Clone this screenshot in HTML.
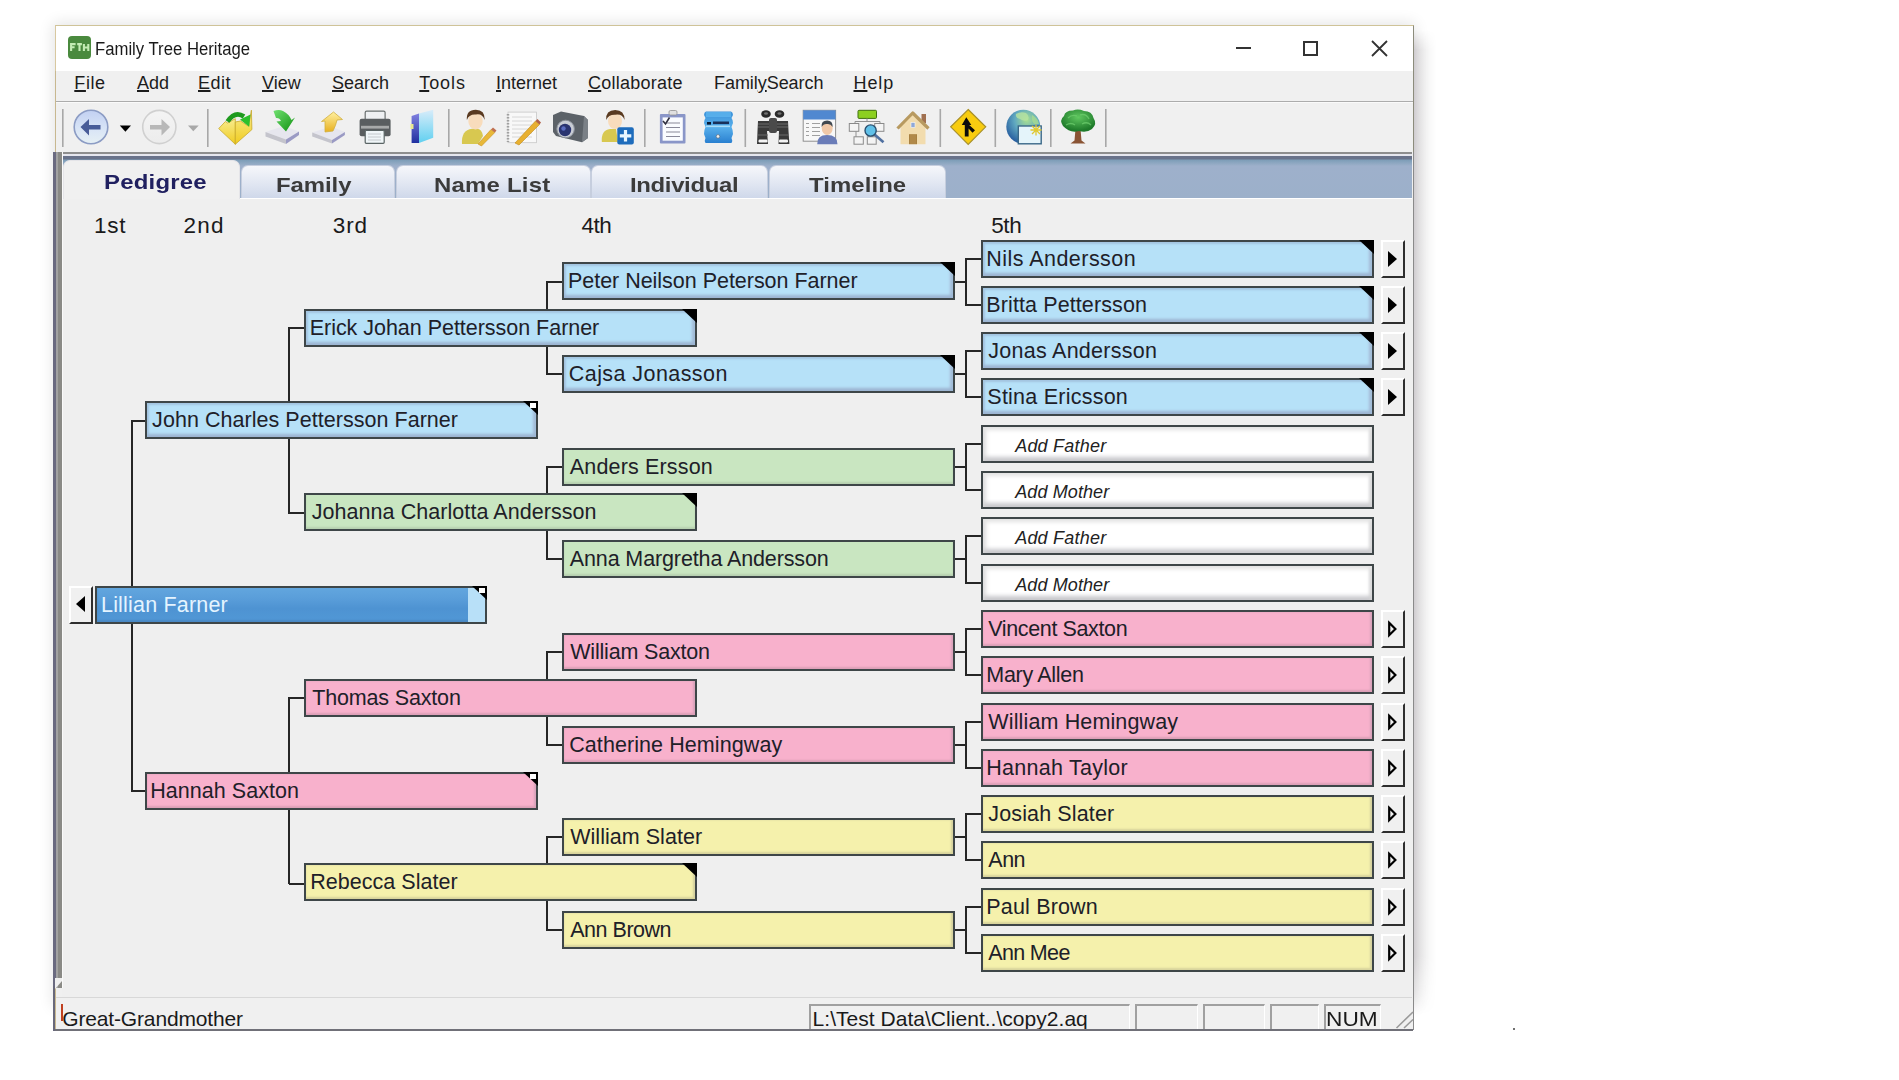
<!DOCTYPE html>
<html><head><meta charset="utf-8"><style>
*{margin:0;padding:0;box-sizing:border-box}
html,body{width:1899px;height:1080px;overflow:hidden;background:#fff;font-family:"Liberation Sans",sans-serif;position:relative}
.abs{position:absolute}
#shadow{position:absolute;left:55px;top:25px;width:1358px;height:980px;box-shadow:0 0 14px 2px rgba(0,0,0,0.11)}
#win{position:absolute;left:55px;top:25px;width:1359px;height:1005px;background:#f0f0f0;border:1px solid #c8b890;border-top-color:#cfc398;border-right-color:#8c8c7c}
#title{position:absolute;left:55px;top:25px;width:1359px;height:46px;background:#fff;border:1px solid #d8c8a0;border-top-color:#cfc398;border-right-color:#8c8c7c;border-bottom:none}
#ttl{position:absolute;left:94.8px;top:39px;font-size:18px;color:#1a1a1a;white-space:nowrap;transform:scaleX(0.928);transform-origin:0 0}
#menubar{position:absolute;left:56px;top:71px;width:1357px;height:30.5px;background:#f0f0f0;border-bottom:1.5px solid #acacac}
.mi{position:absolute;top:72.5px;font-size:18px;color:#1c1c1c;white-space:nowrap}
.mi u{text-decoration:underline;text-decoration-thickness:1.5px;text-underline-offset:1px}
#toolbar{position:absolute;left:56px;top:101.5px;width:1357px;height:50.5px;background:#f0f0f0;border-top:1px solid #fafafa}
.sep{position:absolute;top:109px;width:2px;height:38px;background:#a6a6a6;border-right:1px solid #fff}
#tbline{position:absolute;left:56px;top:152px;width:1356px;height:2px;background:#8e8e8e}
#tabstrip{position:absolute;left:62px;top:154px;width:1350px;height:44px;background:linear-gradient(#e6e6ee 0,#e6e6ee 2px,#69728a 2px,#69728a 5px,#7d9db7 6px,#93aac4 10px,#9eb0cb 12px,#9cb0ca 43px)}
.tab{position:absolute;top:165px;height:33px;border:1px solid #c6cede;border-bottom:none;border-radius:7px 7px 0 0;background:linear-gradient(#f6f7fb,#dfe5f1 60%,#cfd8ea);font-weight:bold;font-size:21px;color:#3b3b3b;text-align:center;white-space:nowrap;line-height:38px}
.tab.on{top:160px;height:39px;background:#f0f0f0;border-color:#e4e4e8}
.tabt{position:absolute;top:173px;font-weight:bold;font-size:21px;color:#3b3b3b;white-space:nowrap;transform:scaleX(1.14);transform-origin:0 0}
.tabt.on{top:170px;color:#202060}
#content{position:absolute;left:62px;top:198px;width:1350px;height:799px;background:#efefef;border-top:1px solid #fff}
#lbar{position:absolute;left:53px;top:152px;width:10px;height:836px;background:linear-gradient(90deg,#6a6a80 0,#6a6a80 2.5px,#a2a2a2 2.5px,#a2a2a2 4.5px,#8a8a86 4.5px,#8a8a86 9px,#fafafa 9px)}
.col{position:absolute;top:213px;font-size:22.5px;color:#1a1a1a;white-space:nowrap}
#status{position:absolute;left:56px;top:997px;width:1356px;height:33px;background:#f0f0f0;border-top:1px solid #d8d8d8}
#winbot{position:absolute;left:53px;top:1029px;width:1360px;height:2px;background:#707078}
.sp{position:absolute;top:1004px;height:25px;border-top:2px solid #a0a0a0;border-left:2px solid #a0a0a0;border-right:1px solid #fff}
.st{position:absolute;top:1007px;font-size:21px;color:#1a1a1a;white-space:nowrap}
#rborder{position:absolute;left:1412.5px;top:152px;width:1px;height:878px;background:#8a8a8a}
/* tree */
.ln{position:absolute;background:#262626}
.bx{position:absolute;width:393px;height:38px;border:2px solid #3e4648}
.bx .tx{position:absolute;left:6px;top:0;line-height:34px;font-size:21.5px;color:#202028;white-space:nowrap}
.bx .it{font-style:italic;font-size:18px;top:2px;color:#222}
.bx.b{background:#b6e1f8;box-shadow:inset 0 2px 2px #a4c6e2,inset 0 -3px 3px #9db5d2,inset 2px 0 2px #a8cbe6,inset -3px 0 3px #a4bcd6}
.bx.g{background:#c9e6c1;box-shadow:inset 0 -2px 2px #b7d0b0}
.bx.p{background:#f8b1cc;box-shadow:inset 0 -2px 2px #dca0b8,inset -2px 0 2px #d8a4bc}
.bx.y{background:#f5f1ac;box-shadow:inset 0 -2px 2px #d8d49c,inset -2px 0 2px #d4d0a0}
.bx.w{background:#fff;box-shadow:inset 0 3px 4px #e4e4e4,inset 0 -4px 4px #c8c8cc,inset 4px 0 4px #ececec,inset -3px 0 3px #e0e0e0}
.bx.sel{background:linear-gradient(#62a6de 0,#5a9eda 30%,#4e93d2 60%,#5198d6 100%);box-shadow:inset 0 -2px 2px #4a88c4}
.bx.sel .tx{color:#e4f4ff}
.bx .tri{position:absolute;right:-2px;top:-2px;width:0;height:0;border-style:solid;border-width:0 15.5px 14px 0;border-color:transparent #000 transparent transparent}
.bx .sq{position:absolute;right:0;top:0;width:6.5px;height:5px;background:#fff}
.bx .strip{position:absolute;right:0;top:0;width:17px;height:34px;background:#b8e0f8}
.arr{position:absolute;width:24px;height:38px;background:#f0f0f0;border-top:2px solid #fff;border-left:2px solid #fff;border-right:2px solid #2e2e2e;border-bottom:2px solid #2e2e2e}
.arr i{position:absolute;left:5px;top:9px;width:0;height:0;border-style:solid;border-width:8px 0 8px 9px;border-color:transparent transparent transparent #000}
.larr{position:absolute;width:24px;height:38px;background:#f0f0f0;border-top:2px solid #fff;border-left:2px solid #fff;border-right:2px solid #2e2e2e;border-bottom:2px solid #2e2e2e}
.larr i{position:absolute;left:4.5px;top:8.5px;width:0;height:0;border-style:solid;border-width:8px 9px 8px 0;border-color:transparent #000 transparent transparent}

</style></head><body>
<div id="shadow"></div>
<div id="rshadow" class="abs" style="left:1414px;top:30px;width:22px;height:985px;background:linear-gradient(90deg,rgba(40,20,40,0.16) 0,rgba(40,30,40,0.10) 25%,rgba(0,0,0,0.04) 60%,rgba(0,0,0,0) 100%);-webkit-mask-image:linear-gradient(transparent 0,#000 2%,#000 94%,transparent 100%)"></div>
<div id="win"></div>
<div id="title"></div>
<svg class="abs" style="left:68px;top:36px" width="23" height="23"><rect x="0" y="0" width="23" height="23" rx="4" fill="#4a8a3e"/><path d="M3.1 15V8.1H7.6M3.1 11.3H6.6M9.2 8.1H13.9M11.5 8.1V15M15.9 8.1V15M20.3 8.1V15M15.9 11.5H20.3" fill="none" stroke="#c4ecb4" stroke-width="2.1"/></svg>
<div id="ttl">Family Tree Heritage</div>
<div class="abs" style="left:1236px;top:47px;width:15px;height:2px;background:#333"></div>
<div class="abs" style="left:1303px;top:41px;width:15px;height:15px;border:2px solid #333"></div>
<svg class="abs" style="left:1371px;top:40px" width="17" height="17"><path d="M1 1L16 16M16 1L1 16" stroke="#333" stroke-width="1.8"/></svg>
<div id="menubar"></div>
<div class="mi" style="left:74.3px;letter-spacing:0.6px"><u>F</u>ile</div>
<div class="mi" style="left:137px"><u>A</u>dd</div>
<div class="mi" style="left:198px;letter-spacing:0.5px"><u>E</u>dit</div>
<div class="mi" style="left:262px"><u>V</u>iew</div>
<div class="mi" style="left:332px"><u>S</u>earch</div>
<div class="mi" style="left:419.3px;letter-spacing:0.9px"><u>T</u>ools</div>
<div class="mi" style="left:496px"><u>I</u>nternet</div>
<div class="mi" style="left:588px;letter-spacing:0.25px"><u>C</u>ollaborate</div>
<div class="mi" style="left:714px;letter-spacing:-0.05px">Famil<u>y</u>Search</div>
<div class="mi" style="left:853.5px;letter-spacing:0.9px"><u>H</u>elp</div>
<div id="toolbar"></div>
<svg class="abs" style="left:0;top:0" width="1120" height="155" viewBox="0 0 1120 155">
<defs>
<linearGradient id="gBack" x1="0" y1="0" x2="0" y2="1"><stop offset="0" stop-color="#c2d0f2"/><stop offset="0.55" stop-color="#d8e4f6"/><stop offset="1" stop-color="#e6f0f4"/></linearGradient>
<linearGradient id="gFwd" x1="0" y1="0" x2="0" y2="1"><stop offset="0" stop-color="#f4f4f4"/><stop offset="1" stop-color="#ececec"/></linearGradient>
<linearGradient id="gFold" x1="0" y1="0" x2="0" y2="1"><stop offset="0" stop-color="#f8ec90"/><stop offset="1" stop-color="#f0cc20"/></linearGradient>
<linearGradient id="gGreen" x1="0" y1="0" x2="1" y2="1"><stop offset="0" stop-color="#70e070"/><stop offset="1" stop-color="#109010"/></linearGradient>
<linearGradient id="gYel" x1="0" y1="0" x2="0" y2="1"><stop offset="0" stop-color="#fff0a0"/><stop offset="1" stop-color="#e8b020"/></linearGradient>
<linearGradient id="gBook" x1="0" y1="0" x2="0" y2="1"><stop offset="0" stop-color="#d8ecfa"/><stop offset="1" stop-color="#60d0f0"/></linearGradient>
<linearGradient id="gSpine" x1="0" y1="0" x2="0" y2="1"><stop offset="0" stop-color="#8080e0"/><stop offset="1" stop-color="#2030a0"/></linearGradient>
<linearGradient id="gDrawer" x1="0" y1="0" x2="0" y2="1"><stop offset="0" stop-color="#3a90d8"/><stop offset="0.5" stop-color="#58b0ec"/><stop offset="1" stop-color="#2a80d0"/></linearGradient>
<radialGradient id="gGlobe" cx="0.6" cy="0.3" r="0.8"><stop offset="0" stop-color="#a8e090"/><stop offset="0.45" stop-color="#60a8c0"/><stop offset="1" stop-color="#1a4c98"/></radialGradient>
<radialGradient id="gTree" cx="0.5" cy="0.35" r="0.6"><stop offset="0" stop-color="#60c860"/><stop offset="1" stop-color="#1e7a2a"/></radialGradient>
</defs>
<!-- separators -->
<g fill="#a8a8a8">
<rect x="62" y="109" width="1.6" height="38"/><rect x="207" y="109" width="1.6" height="38"/><rect x="448" y="109" width="1.6" height="38"/>
<rect x="644" y="109" width="1.6" height="38"/><rect x="744.5" y="109" width="1.6" height="38"/><rect x="939.5" y="109" width="1.6" height="38"/>
<rect x="994.5" y="109" width="1.6" height="38"/><rect x="1050" y="109" width="1.6" height="38"/><rect x="1105" y="109" width="1.6" height="38"/>
</g>
<!-- back -->
<circle cx="91" cy="127" r="16.8" fill="url(#gBack)" stroke="#8c9cc4" stroke-width="1.6"/>
<path d="M80.5 127 L89 119 L89 125 L100.5 125 L100.5 129.5 L89 129.5 L89 135.5 Z" fill="#485c98"/>
<path d="M119.8 125.4 L131 125.4 L125.4 131.8 Z" fill="#000"/>
<!-- forward -->
<circle cx="159.3" cy="127" r="16.6" fill="url(#gFwd)" stroke="#d0d0d0" stroke-width="1.6"/>
<path d="M170 127 L161.5 119 L161.5 125 L150 125 L150 129.5 L161.5 129.5 L161.5 135.5 Z" fill="#b8b8b8"/>
<path d="M188 125.4 L198.7 125.4 L193.3 131.3 Z" fill="#a8a8a8"/>
<!-- folder -->
<path d="M218.7 128.6 L225.4 121.5 L227.7 123 L235.3 118.7 L235.3 144.3 Z" fill="url(#gFold)" stroke="#c8a828" stroke-width="0.8"/>
<path d="M235.3 144.3 L235.3 122 L240.5 121 L248.6 126.3 L251.4 110.2 L251.9 129.6 Z" fill="url(#gFold)" stroke="#c8a828" stroke-width="0.8"/>
<path d="M227.5 121.5 Q235 110.5 244 116.5" fill="none" stroke="#1e9a1e" stroke-width="4.6"/>
<path d="M240 119.5 L250.5 114.5 L249.2 126.8 Z" fill="#2cc02c"/>
<!-- download disk -->
<path d="M265.5 132 L284 126 L299 131.5 L286 139.5 Z" fill="#e6e6ee"/>
<path d="M265.5 132 L286 139.5 L286 144 L265.5 136.5 Z" fill="#c4c4cc"/>
<path d="M286 139.5 L299 131.5 L299 135 L286 144 Z" fill="#9a9ac4"/>
<path d="M273.5 111 Q279 109 283 111 Q289 114 291.5 120 L295 117.5 L286 131.5 L276.5 121.5 L281 121 Q279.5 117.5 276 118 Z" fill="url(#gGreen)"/>
<!-- upload disk -->
<path d="M312.2 132.5 L331 126.5 L344.9 132 L332 140 Z" fill="#e6e6ee"/>
<path d="M312.2 132.5 L332 140 L332 143.5 L312.2 136.5 Z" fill="#c4c4cc"/>
<path d="M332 140 L344.9 132 L344.9 135 L332 143.5 Z" fill="#9a9ac4"/>
<path d="M325 132 L325 121 L321.5 121.5 L333.5 112 L342.5 119.5 L337 120 Q336 125 333 131 Z" fill="url(#gYel)" stroke="#d0b040" stroke-width="0.8"/>
<!-- printer -->
<rect x="365.2" y="111.1" width="19.9" height="11" rx="1.5" fill="#eef0f2" stroke="#6a7070" stroke-width="1.2"/>
<rect x="359.6" y="118.7" width="31" height="17.5" rx="2" fill="#5a5e60"/>
<rect x="361" y="125.8" width="28" height="2.8" fill="#a8aaaa"/>
<rect x="365.2" y="130.5" width="19" height="12.8" rx="1" fill="#f0f6f8" stroke="#5a6464" stroke-width="1.2"/>
<path d="M368 134h13M368 137h13M368 140h13" stroke="#c0c4c8" stroke-width="0.9"/>
<!-- book -->
<path d="M419 113.5 L433.2 109.8 L433.2 137.7 L419 143 Z" fill="url(#gBook)"/>
<path d="M411.6 116 L419 113.5 L419 143 L411.6 143 Z" fill="url(#gSpine)"/>
<rect x="410.5" y="124" width="3" height="5" fill="#e8e890"/>
<!-- person edit -->
<path d="M462 144 Q461 130 472 128.7 L477 128.7 Q482 129 483 136 L478 144 Z" fill="#d8c850"/>
<ellipse cx="475.5" cy="121" rx="7.2" ry="8.5" fill="#f8dcbc"/>
<path d="M466.9 120 Q466 109.8 475.8 109.8 Q485 109.8 484.8 120 Q482 113 475.8 114.5 Q469 114 466.9 120 Z" fill="#5a3a20"/>
<path d="M478 144 L491 129.5 L494.8 132.5 L481.5 146 Z" fill="#e8b838" stroke="#c89020" stroke-width="0.6"/>
<path d="M491 129.5 L493 127.5 L496.5 130.5 L494.8 132.5 Z" fill="#c07050"/>
<!-- notepad -->
<rect x="508" y="112.1" width="28.5" height="30.6" fill="#f8f8f8" stroke="#c8c8c8" stroke-width="0.8"/>
<path d="M512 117h20M512 121h20M512 125h20M512 129h20M512 133h20M512 137h20" stroke="#d4d4d4" stroke-width="0.9"/>
<path d="M508 114v28" stroke="#a0a0a0" stroke-width="2.5" stroke-dasharray="1.5 1.5"/>
<path d="M515 143 L535.5 121 L539.5 124.5 L519 145 Z" fill="#e8b030" stroke="#c08818" stroke-width="0.6"/>
<path d="M535.5 121 L537.5 119 L541 122.5 L539.5 124.5 Z" fill="#b06048"/>
<!-- camera -->
<path d="M553 115 L561 111.4 L584 116 L588 120 L588 138 L582 142.3 L556 136 L553 132 Z" fill="#5c6268"/>
<path d="M584 116 L588 120 L588 138 L582 142.3 Z" fill="#7a8086"/>
<circle cx="565.6" cy="129" r="8.8" fill="#c8ccd4" stroke="#8a9098" stroke-width="1"/>
<circle cx="565" cy="130" r="6.2" fill="#2a3470"/>
<circle cx="563.5" cy="128.5" r="2.2" fill="#5a6cc0"/>
<!-- person add -->
<path d="M601.8 142 Q601 130 610 129 L616 129 L618 142 Z" fill="#d8c850"/>
<ellipse cx="615" cy="121" rx="7" ry="8" fill="#f8dcbc"/>
<path d="M606.2 120 Q605.5 110 615.2 110 Q624.6 110 624.6 120 Q622 113.5 615.2 114.8 Q608.5 114.5 606.2 120 Z" fill="#5a3a20"/>
<rect x="617.3" y="127.2" width="16.5" height="17.4" rx="2" fill="#1e6cbc"/>
<path d="M625.5 130 v11.5 M619.8 135.8 h11.5" stroke="#e8f6ff" stroke-width="3.2"/>
<!-- clipboard -->
<rect x="659.9" y="113.9" width="25.6" height="29.6" rx="1" fill="#8a96c8"/>
<rect x="662.6" y="117.4" width="20.2" height="23.3" fill="#fafcff"/>
<rect x="669" y="110.5" width="8" height="4.5" rx="1.5" fill="#e0e0e0" stroke="#909090" stroke-width="0.8"/>
<path d="M666 123h14M666 127.5h14M666 132h14M666 136.5h14" stroke="#8a8a9a" stroke-width="1.2"/>
<path d="M663 121 L665.5 124 L669.5 117.5" fill="none" stroke="#303040" stroke-width="1.6"/>
<!-- drawer -->
<path d="M706 111.5 L731 111.5 Q733 112 733 115 L731.5 118 Q733 120 733 123 L731.5 127 Q733 130 733 134 L731.5 138 Q733 141 731.5 143 L705.5 143 Q704 141 705.5 138 L704 134 Q704 130 705.5 127 L704 123 Q704 120 705.5 118 L704 115 Q704 112 706 111.5 Z" fill="url(#gDrawer)"/>
<rect x="706" y="112" width="25" height="5" fill="#5cb4ee" opacity="0.8"/>
<rect x="707" y="122" width="4" height="2.6" fill="#0a1a30"/>
<rect x="713" y="121.5" width="16" height="2.6" fill="#18305a"/>
<rect x="706" y="125.5" width="24" height="1.6" fill="#a8dcf8"/>
<circle cx="718" cy="136.4" r="1.8" fill="#f0f0f0" stroke="#506070" stroke-width="0.6"/>
<!-- binoculars -->
<ellipse cx="766" cy="114" rx="4.8" ry="3.8" fill="#2a2a2a"/><ellipse cx="779.5" cy="114" rx="4.8" ry="3.8" fill="#2a2a2a"/>
<ellipse cx="766" cy="113.5" rx="2" ry="1.2" fill="#707070"/><ellipse cx="779.5" cy="113.5" rx="2" ry="1.2" fill="#707070"/>
<path d="M758 121 L770 121 L770 131 L767 131 L768 144 L757 144 L757.5 131 Z" fill="#3a3a3a"/>
<path d="M788 121 L776 121 L776 131 L779 131 L778.5 144 L789.4 144 L788.5 131 Z" fill="#3a3a3a"/>
<path d="M758 124h12M758 127h12M776 124h12M776 127h12M758 135h10M779 135h10" stroke="#6a6a6a" stroke-width="1"/>
<rect x="769" y="118" width="8" height="15" rx="2" fill="#4a4a4a"/>
<rect x="758.5" y="139.5" width="9" height="3" rx="1.2" fill="#f4f4f4"/><rect x="779" y="139.5" width="9" height="3" rx="1.2" fill="#f4f4f4"/>
<!-- window person -->
<rect x="803.2" y="110.3" width="32.4" height="30.9" fill="#f8f8f8" stroke="#909090" stroke-width="1"/>
<rect x="803.2" y="110.3" width="32.4" height="9.2" fill="#5088d0"/>
<path d="M806 123.5h3M812 123.5h8M806 127.5h3M812 127.5h8M806 131.5h3M812 131.5h8M806 135.5h3M812 135.5h8" stroke="#a0a0a0" stroke-width="1"/>
<path d="M817.2 144.2 Q817 135 827 135 Q837.5 135 837.5 144.2 Z" fill="#6a7cb8"/>
<ellipse cx="827.2" cy="128" rx="5.5" ry="7" fill="#f0c8a8"/>
<path d="M821.6 127 Q821 120.6 827.2 120.6 Q832.7 120.6 832.7 127 Q830.5 123.5 827.2 124 Q823.5 123.5 821.6 127 Z" fill="#404850"/>
<!-- chart magnifier -->
<rect x="858" y="110.3" width="18.5" height="8.1" rx="1" fill="#8cd020" stroke="#407010" stroke-width="1"/>
<path d="M867 118.4v3 M855 126v-4.5h25v4.5 M856 131v6 M871 131v6" stroke="#909090" stroke-width="1" fill="none"/>
<rect x="849.3" y="123.5" width="9.5" height="7.8" fill="#f4f4f4" stroke="#8a8a8a" stroke-width="1"/>
<rect x="874.7" y="123.5" width="9.2" height="7.8" fill="#f4f4f4" stroke="#8a8a8a" stroke-width="1"/>
<rect x="854" y="136.8" width="9.3" height="7.4" fill="#f4f4f4" stroke="#8a8a8a" stroke-width="1"/>
<rect x="867.3" y="136.8" width="8.9" height="7.4" fill="#f4f4f4" stroke="#8a8a8a" stroke-width="1"/>
<path d="M874 134 L883.5 142.3" stroke="#5070a0" stroke-width="2.6"/>
<circle cx="870.6" cy="130.5" r="5.6" fill="#60c0e8" stroke="#2a5070" stroke-width="1.4"/>
<!-- house -->
<rect x="921.5" y="114" width="4.5" height="9" fill="#a07050"/>
<path d="M900.5 126 L912.7 114 L925.5 126 L925.5 144.2 L900.5 144.2 Z" fill="#f2dcae"/>
<path d="M897.5 128.5 L912.7 113 L928.5 128.5" fill="none" stroke="#b89a60" stroke-width="3.2" stroke-linejoin="round"/>
<rect x="909" y="134.2" width="8" height="10" fill="#a88040"/>
<path d="M911 134.5v9.5M913 134.5v9.5M915 134.5v9.5" stroke="#c8a060" stroke-width="0.6"/>
<rect x="911" y="122.5" width="4" height="5" fill="#90a8d8" stroke="#f8f8f8" stroke-width="0.6"/>
<!-- diamond -->
<path d="M968.2 109.5 L985.7 126.8 L968.2 144.3 L950.7 126.8 Z" fill="#f8cc10" stroke="#a89028" stroke-width="1.2"/>
<path d="M966.3 117.2 L961.8 125 L964.8 125 L964.8 136.5 L968.6 136.5 L968.6 128.5 L972.5 132.8 L975 130.2 L968.6 124.5 L968.6 125 L971.3 125 Z" fill="#0c0c0c"/>
<!-- globe -->
<circle cx="1023.3" cy="126.8" r="17" fill="url(#gGlobe)"/>
<path d="M1016 114 Q1021 111 1026 113 Q1030 116 1028 120 Q1024 122 1020 119 Q1015 118 1016 114 Z" fill="#b8e4a0" opacity="0.8"/>
<path d="M1032 115 Q1038 118 1039 124 L1034 124 Q1031 120 1032 115 Z" fill="#a8dc90" opacity="0.8"/>
<rect x="1018.3" y="126" width="22.9" height="17.8" fill="#e4f4fa" stroke="#3a6888" stroke-width="1.4"/>
<path d="M1032 126 L1040 134 M1040 126 L1032 134 M1036 124.5 v11 M1030.5 130 h11" stroke="#e0c830" stroke-width="1.3"/>
<!-- tree -->
<path d="M1075.5 129 L1074.5 140.5 L1070.5 143.4 L1085.5 143.4 L1081.5 140.5 L1080.5 129 Z" fill="#8a5434"/>
<path d="M1063 126 Q1059 120 1064 116 Q1065 110.5 1073 110.5 Q1078 108.5 1084 111 Q1092 111 1093.5 118 Q1097.5 124 1092 129 Q1087 133 1079 131 Q1070 133.5 1063 126 Z" fill="url(#gTree)"/>
<path d="M1068 118 Q1072 114 1077 116 M1080 115 Q1086 113 1089 119 M1066 125 Q1071 122 1075 125 M1082 124 Q1087 121 1091 125" fill="none" stroke="#70d070" stroke-width="1.3" opacity="0.7"/>
</svg>

<div id="tbline"></div>
<div id="tabstrip"></div>
<div id="content"></div>
<div class="tab" style="left:241px;width:154px"></div>
<div class="tab" style="left:396px;width:195px"></div>
<div class="tab" style="left:591px;width:177px"></div>
<div class="tab" style="left:769px;width:177px"></div>
<div class="tab on" style="left:63px;width:177px"></div>
<div class="tabt" style="left:276.4px;letter-spacing:-0.06px">Family</div>
<div class="tabt" style="left:434.4px;letter-spacing:0.2px">Name List</div>
<div class="tabt" style="left:630px;letter-spacing:-0.31px">Individual</div>
<div class="tabt" style="left:809.1px;letter-spacing:0.06px">Timeline</div>
<div class="tabt on" style="left:104.4px;letter-spacing:0.18px">Pedigree</div>
<div id="lbar"></div>
<div id="rborder"></div>
<div class="col" style="left:94px;letter-spacing:0.75px">1st</div>
<div class="col" style="left:183.5px;letter-spacing:1.2px">2nd</div>
<div class="col" style="left:332.8px;letter-spacing:0.9px">3rd</div>
<div class="col" style="left:581.5px;letter-spacing:-0.5px">4th</div>
<div class="col" style="left:991.2px;letter-spacing:-0.35px">5th</div>
<div id="status"></div>
<div class="st" style="left:62.3px;letter-spacing:-0.16px">Great-Grandmother</div>
<div class="abs" style="left:61px;top:1004px;width:2px;height:17px;background:#c04020"></div>
<div class="sp" style="left:809px;width:321px"></div>
<div class="st" style="left:812.6px;letter-spacing:0.03px">L:\Test Data\Client..\copy2.aq</div>
<div class="sp" style="left:1135px;width:63px"></div>
<div class="sp" style="left:1203px;width:62px"></div>
<div class="sp" style="left:1270px;width:49px"></div>
<div class="sp" style="left:1324px;width:57px"></div>
<div class="st" style="left:1326.3px;letter-spacing:0;transform:scaleX(1.08);transform-origin:0 0">NUM</div>
<svg class="abs" style="left:1394px;top:1010px" width="20" height="20"><path d="M2.5 18 L19 2 M10 18 L19 9.5" stroke="#9a9a9a" stroke-width="1.6"/></svg>
<div id="winbot"></div>
<div id="lbot" class="abs" style="left:53px;top:986px;width:2px;height:45px;background:#68687a"></div>
<svg class="abs" style="left:53px;top:978px" width="10" height="12"><path d="M2 0 L9 0 L9 3 L2 11 Z" fill="#efefef"/></svg>
<div id="dot" class="abs" style="left:1513px;top:1028px;width:2px;height:2px;background:#404040;border-radius:1px"></div>

<div id="tree">
<div class="ln" style="left:954px;top:280.6px;width:12px;height:2px"></div><div class="ln" style="left:965px;top:257.5px;width:2px;height:48.3px"></div><div class="ln" style="left:966px;top:257.5px;width:15px;height:2px"></div><div class="ln" style="left:966px;top:303.8px;width:15px;height:2px"></div><div class="ln" style="left:954px;top:373.2px;width:12px;height:2px"></div><div class="ln" style="left:965px;top:350.1px;width:2px;height:48.3px"></div><div class="ln" style="left:966px;top:350.1px;width:15px;height:2px"></div><div class="ln" style="left:966px;top:396.4px;width:15px;height:2px"></div><div class="ln" style="left:954px;top:465.9px;width:12px;height:2px"></div><div class="ln" style="left:965px;top:442.7px;width:2px;height:48.3px"></div><div class="ln" style="left:966px;top:442.7px;width:15px;height:2px"></div><div class="ln" style="left:966px;top:489.0px;width:15px;height:2px"></div><div class="ln" style="left:954px;top:558.4px;width:12px;height:2px"></div><div class="ln" style="left:965px;top:535.3px;width:2px;height:48.3px"></div><div class="ln" style="left:966px;top:535.3px;width:15px;height:2px"></div><div class="ln" style="left:966px;top:581.6px;width:15px;height:2px"></div><div class="ln" style="left:954px;top:651.0px;width:12px;height:2px"></div><div class="ln" style="left:965px;top:627.9px;width:2px;height:48.3px"></div><div class="ln" style="left:966px;top:627.9px;width:15px;height:2px"></div><div class="ln" style="left:966px;top:674.2px;width:15px;height:2px"></div><div class="ln" style="left:954px;top:743.6px;width:12px;height:2px"></div><div class="ln" style="left:965px;top:720.5px;width:2px;height:48.3px"></div><div class="ln" style="left:966px;top:720.5px;width:15px;height:2px"></div><div class="ln" style="left:966px;top:766.8px;width:15px;height:2px"></div><div class="ln" style="left:954px;top:836.2px;width:12px;height:2px"></div><div class="ln" style="left:965px;top:813.1px;width:2px;height:48.3px"></div><div class="ln" style="left:966px;top:813.1px;width:15px;height:2px"></div><div class="ln" style="left:966px;top:859.4px;width:15px;height:2px"></div><div class="ln" style="left:954px;top:928.8px;width:12px;height:2px"></div><div class="ln" style="left:965px;top:905.7px;width:2px;height:48.3px"></div><div class="ln" style="left:966px;top:905.7px;width:15px;height:2px"></div><div class="ln" style="left:966px;top:952.0px;width:15px;height:2px"></div><div class="ln" style="left:546px;top:280.6px;width:2px;height:94.6px"></div><div class="ln" style="left:547px;top:280.6px;width:15px;height:2px"></div><div class="ln" style="left:547px;top:373.2px;width:15px;height:2px"></div><div class="ln" style="left:546px;top:465.9px;width:2px;height:94.6px"></div><div class="ln" style="left:547px;top:465.9px;width:15px;height:2px"></div><div class="ln" style="left:547px;top:558.4px;width:15px;height:2px"></div><div class="ln" style="left:546px;top:651.0px;width:2px;height:94.6px"></div><div class="ln" style="left:547px;top:651.0px;width:15px;height:2px"></div><div class="ln" style="left:547px;top:743.6px;width:15px;height:2px"></div><div class="ln" style="left:546px;top:836.2px;width:2px;height:94.6px"></div><div class="ln" style="left:547px;top:836.2px;width:15px;height:2px"></div><div class="ln" style="left:547px;top:928.8px;width:15px;height:2px"></div><div class="ln" style="left:288px;top:326.9px;width:2px;height:187.2px"></div><div class="ln" style="left:289px;top:326.9px;width:15px;height:2px"></div><div class="ln" style="left:289px;top:512.1px;width:15px;height:2px"></div><div class="ln" style="left:288px;top:697.3px;width:2px;height:187.2px"></div><div class="ln" style="left:289px;top:697.3px;width:15px;height:2px"></div><div class="ln" style="left:289px;top:882.5px;width:15px;height:2px"></div><div class="ln" style="left:131px;top:419.5px;width:2px;height:372.4px"></div><div class="ln" style="left:132px;top:419.5px;width:13px;height:2px"></div><div class="ln" style="left:132px;top:790.0px;width:13px;height:2px"></div>
<div class="bx b" style="left:981px;top:239.5px"><span class="tx" style="left:3.3px;letter-spacing:0.462px">Nils Andersson</span><i class="tri"></i></div><div class="arr" style="left:1381px;top:239.5px"><i></i></div><div class="bx b" style="left:981px;top:285.8px"><span class="tx" style="left:3.3px;letter-spacing:0.106px">Britta Pettersson</span><i class="tri"></i></div><div class="arr" style="left:1381px;top:285.8px"><i></i></div><div class="bx b" style="left:981px;top:332.1px"><span class="tx" style="left:5.3px;letter-spacing:0.264px">Jonas Andersson</span><i class="tri"></i></div><div class="arr" style="left:1381px;top:332.1px"><i></i></div><div class="bx b" style="left:981px;top:378.4px"><span class="tx" style="left:4.3px;letter-spacing:0.239px">Stina Ericsson</span><i class="tri"></i></div><div class="arr" style="left:1381px;top:378.4px"><i></i></div><div class="bx w" style="left:981px;top:424.7px"><span class="tx it" style="left:32.2px;letter-spacing:0.21px">Add Father</span></div><div class="bx w" style="left:981px;top:471.0px"><span class="tx it" style="left:32.2px;letter-spacing:0.111px">Add Mother</span></div><div class="bx w" style="left:981px;top:517.3px"><span class="tx it" style="left:32.2px;letter-spacing:0.21px">Add Father</span></div><div class="bx w" style="left:981px;top:563.6px"><span class="tx it" style="left:32.2px;letter-spacing:0.111px">Add Mother</span></div><div class="bx p" style="left:981px;top:609.9px"><span class="tx" style="left:5.3px;letter-spacing:-0.377px">Vincent Saxton</span></div><div class="arr" style="left:1381px;top:609.9px"><svg width="12" height="18" style="position:absolute;left:4px;top:8px"><path d="M2.2 2.8 L8.4 9 L2.2 15.2 Z" fill="none" stroke="#000" stroke-width="2.2" stroke-linejoin="miter"/></svg></div><div class="bx p" style="left:981px;top:656.2px"><span class="tx" style="left:3.3px;letter-spacing:-0.312px">Mary Allen</span></div><div class="arr" style="left:1381px;top:656.2px"><svg width="12" height="18" style="position:absolute;left:4px;top:8px"><path d="M2.2 2.8 L8.4 9 L2.2 15.2 Z" fill="none" stroke="#000" stroke-width="2.2" stroke-linejoin="miter"/></svg></div><div class="bx p" style="left:981px;top:702.5px"><span class="tx" style="left:5.3px;letter-spacing:0.138px">William Hemingway</span></div><div class="arr" style="left:1381px;top:702.5px"><svg width="12" height="18" style="position:absolute;left:4px;top:8px"><path d="M2.2 2.8 L8.4 9 L2.2 15.2 Z" fill="none" stroke="#000" stroke-width="2.2" stroke-linejoin="miter"/></svg></div><div class="bx p" style="left:981px;top:748.8px"><span class="tx" style="left:3.3px;letter-spacing:0.266px">Hannah Taylor</span></div><div class="arr" style="left:1381px;top:748.8px"><svg width="12" height="18" style="position:absolute;left:4px;top:8px"><path d="M2.2 2.8 L8.4 9 L2.2 15.2 Z" fill="none" stroke="#000" stroke-width="2.2" stroke-linejoin="miter"/></svg></div><div class="bx y" style="left:981px;top:795.1px"><span class="tx" style="left:5.3px;letter-spacing:0.134px">Josiah Slater</span></div><div class="arr" style="left:1381px;top:795.1px"><svg width="12" height="18" style="position:absolute;left:4px;top:8px"><path d="M2.2 2.8 L8.4 9 L2.2 15.2 Z" fill="none" stroke="#000" stroke-width="2.2" stroke-linejoin="miter"/></svg></div><div class="bx y" style="left:981px;top:841.4px"><span class="tx" style="left:5.3px;letter-spacing:-0.5px">Ann</span></div><div class="arr" style="left:1381px;top:841.4px"><svg width="12" height="18" style="position:absolute;left:4px;top:8px"><path d="M2.2 2.8 L8.4 9 L2.2 15.2 Z" fill="none" stroke="#000" stroke-width="2.2" stroke-linejoin="miter"/></svg></div><div class="bx y" style="left:981px;top:887.7px"><span class="tx" style="left:3.3px;letter-spacing:0.167px">Paul Brown</span></div><div class="arr" style="left:1381px;top:887.7px"><svg width="12" height="18" style="position:absolute;left:4px;top:8px"><path d="M2.2 2.8 L8.4 9 L2.2 15.2 Z" fill="none" stroke="#000" stroke-width="2.2" stroke-linejoin="miter"/></svg></div><div class="bx y" style="left:981px;top:934.0px"><span class="tx" style="left:5.3px;letter-spacing:-0.667px">Ann Mee</span></div><div class="arr" style="left:1381px;top:934.0px"><svg width="12" height="18" style="position:absolute;left:4px;top:8px"><path d="M2.2 2.8 L8.4 9 L2.2 15.2 Z" fill="none" stroke="#000" stroke-width="2.2" stroke-linejoin="miter"/></svg></div><div class="bx b" style="left:562px;top:261.8px"><span class="tx" style="left:4.0px;letter-spacing:-0.028px">Peter Neilson Peterson Farner</span><i class="tri"></i></div><div class="bx b" style="left:562px;top:354.6px"><span class="tx" style="left:4.8px;letter-spacing:0.43px">Cajsa Jonasson</span><i class="tri"></i></div><div class="bx g" style="left:562px;top:447.9px"><span class="tx" style="left:5.8px;letter-spacing:0.158px">Anders Ersson</span></div><div class="bx g" style="left:562px;top:540.4px"><span class="tx" style="left:5.8px;letter-spacing:-0.122px">Anna Margretha Andersson</span></div><div class="bx p" style="left:562px;top:633.0px"><span class="tx" style="left:6.2px;letter-spacing:-0.178px">William Saxton</span></div><div class="bx p" style="left:562px;top:725.6px"><span class="tx" style="left:5.2px;letter-spacing:0.083px">Catherine Hemingway</span></div><div class="bx y" style="left:562px;top:818.2px"><span class="tx" style="left:6.2px;letter-spacing:0.038px">William Slater</span></div><div class="bx y" style="left:562px;top:910.8px"><span class="tx" style="left:6.2px;letter-spacing:-0.475px">Ann Brown</span></div><div class="bx b" style="left:304px;top:308.9px"><span class="tx" style="left:3.7px;letter-spacing:-0.028px">Erick Johan Pettersson Farner</span><i class="tri"></i></div><div class="bx g" style="left:304px;top:493.4px"><span class="tx" style="left:5.7px;letter-spacing:0.062px">Johanna Charlotta Andersson</span><i class="tri"></i></div><div class="bx p" style="left:304px;top:679.3px"><span class="tx" style="left:6.2px;letter-spacing:-0.158px">Thomas Saxton</span></div><div class="bx y" style="left:304px;top:863.3px"><span class="tx" style="left:4.2px;letter-spacing:0.038px">Rebecca Slater</span><i class="tri"></i></div><div class="bx b" style="left:145px;top:400.5px"><span class="tx" style="left:5.1px;letter-spacing:0.041px">John Charles Pettersson Farner</span><i class="tri"></i><i class="sq"></i></div><div class="bx p" style="left:145px;top:771.6px"><span class="tx" style="left:3.2px;letter-spacing:0.042px">Hannah Saxton</span><i class="tri"></i><i class="sq"></i></div><div class="bx sel" style="left:95px;width:392px;top:585.8px"><span class="tx" style="left:4.0px;letter-spacing:0.185px">Lillian Farner</span><i class="strip"></i><i class="tri"></i><i class="sq"></i></div><div class="larr" style="left:69px;top:585.8px"><i></i></div>
</div>
</body></html>
